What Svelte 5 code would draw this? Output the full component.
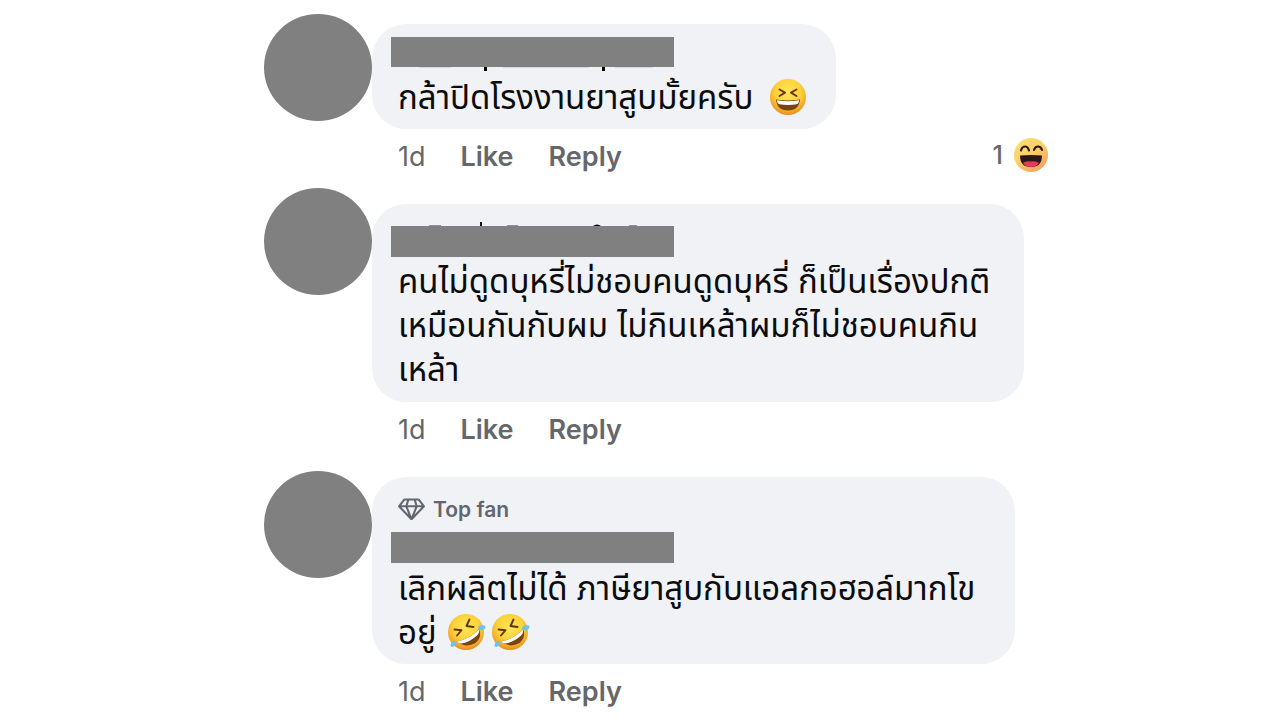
<script>
  const comments = [
    {
      kind: 'short',
      lines: [{ text: 'กล้าปิดโรงงานยาสูบมั้ยครับ', emoji: ['laugh'] }],
      reactions: 1
    },
    {
      kind: 'long',
      lines: [
        { text: 'คนไม่ดูดบุหรี่ไม่ชอบคนดูดบุหรี่ ก็เป็นเรื่องปกติ' },
        { text: 'เหมือนกันกับผม ไม่กินเหล้าผมก็ไม่ชอบคนกิน' },
        { text: 'เหล้า' }
      ]
    },
    {
      kind: 'fan',
      badge: 'Top fan',
      lines: [
        { text: 'เลิกผลิตไม่ได้ ภาษียาสูบกับแอลกอฮอล์มากโข' },
        { text: 'อยู่', emoji: ['rofl', 'rofl'] }
      ]
    }
  ];
</script>

{#snippet laugh()}
  <svg class="emoji" viewBox="0 0 36 36" role="img" aria-label="laughing">
    <circle cx="18" cy="18" r="18" fill="url(#face)" />
    <path d="M9.500 10.500 15 13.700 9.500 17M26.500 10.500 21 13.700 26.500 17" fill="none" stroke="#6b3a08" stroke-width="2" stroke-linecap="round" stroke-linejoin="round" />
    <path d="M6 20.500Q18 22.500 30 20.500Q29 31.500 18 31.500T6 20.500Z" fill="#7a4310" />
    <path d="M7 21.200Q18 23.200 29 21.200Q29 24.700 26.500 25.200Q18 26.600 9.500 25.200Q7 24.700 7 21.200Z" fill="#fff" />
  </svg>
{/snippet}

{#snippet rofl()}
  <svg class="emoji" viewBox="0 0 36 36" role="img" aria-label="rolling on the floor laughing">
    <circle cx="18" cy="18" r="18" fill="url(#face)" />
    <path d="M6.500 15.500 13.500 16.200 9 21.500M21.500 5.500 18.500 12 25.500 13" fill="none" stroke="#5f3508" stroke-width="1.900" stroke-linecap="round" stroke-linejoin="round" />
    <path d="M9 27.500Q22 25 31 15Q34.500 23 27.500 29Q18 34.500 9 27.500Z" fill="#7a4310" />
    <path d="M9 27.500Q22 25 30.600 15.500Q32 18.500 29 21.500Q22 28 13.500 29.500Q10.500 29.500 9 27.500Z" fill="#fff" />
    <path d="M30 14.500Q30 10 37 11.500Q38.500 14.500 35 16Q32 17 30 14.500ZM8 26.500Q9.500 31.500 4.500 33Q2.500 33.500 2.500 31Q3 27.500 8 26.500Z" fill="#6cc4ea" />
  </svg>
{/snippet}

<svg class="defs" aria-hidden="true">
  <defs>
    <radialGradient id="face" cx=".5" cy=".36" r=".65">
      <stop offset="0" stop-color="#ffe65a" />
      <stop offset=".55" stop-color="#fdd238" />
      <stop offset=".82" stop-color="#f3aa2b" />
      <stop offset="1" stop-color="#e38818" />
    </radialGradient>
    <linearGradient id="haha" x1="0" y1="0" x2=".7" y2="1">
      <stop offset="0" stop-color="#ffe571" />
      <stop offset=".5" stop-color="#fcd06a" />
      <stop offset="1" stop-color="#f5a25c" />
    </linearGradient>
  </defs>
</svg>

<main>
  <ul class="thread">
    {#each comments as comment}
      <li class="comment {comment.kind}">
        <div class="avatar"></div>
        <article>
          <div class="bubble">
            {#if comment.badge}
              <div class="badge">
                <svg viewBox="0 0 26 22" aria-hidden="true">
                  <path d="M6 1.500H20L25 8 13 20.500 1 8ZM1 8H25M10 1.500 8 8 13 20.500 18 8 16 1.500" />
                </svg>
                {comment.badge}
              </div>
            {/if}
            <div class="name">
              {#if comment.kind === 'short'}
                <svg class="marks below" viewBox="0 0 283 5" aria-hidden="true">
                  <path d="M93 0H96V4H93ZM211 0H214V4H211Z" />
                  <path d="M28 0H60V1H28ZM112 0H198V1H112ZM224 0H262V1H224Z" opacity=".1" />
                </svg>
              {:else if comment.kind === 'long'}
                <svg class="marks above" viewBox="0 0 283 5" aria-hidden="true">
                  <path d="M89 1H91V5H89ZM202 5Q206 2 210 5Z" />
                  <path d="M38 4H50V5H38ZM116 4H127V5H116ZM238 4H246V5H238Z" opacity=".4" />
                </svg>
              {/if}
            </div>
            <p>
              {#each comment.lines as line}
                <span class="line">
                  {line.text}
                  {#if line.emoji}
                    <span class="emojis">
                      {#each line.emoji as name}
                        {#if name === 'laugh'}{@render laugh()}{:else}{@render rofl()}{/if}
                      {/each}
                    </span>
                  {/if}
                </span>
              {/each}
            </p>
          </div>
          <footer>
            <time>1d</time>
            <button type="button">Like</button>
            <button type="button">Reply</button>
            {#if comment.reactions}
              <span class="reactions">
                {comment.reactions}
                <svg viewBox="0 0 34 34" role="img" aria-label="Haha">
                  <circle cx="17" cy="17" r="17" fill="url(#haha)" />
                  <path d="M7 12.500Q8 8.500 11 8.500T15 12.500M20 12Q21 8.500 24 8.500T28 12" fill="none" stroke="#2c1d18" stroke-width="2.200" stroke-linecap="round" />
                  <path d="M6 17.500Q17 16.500 28 17.500Q28 29 17 29T6 17.500Z" fill="#2d1716" />
                  <path d="M9 25Q12 22.500 17 23.500Q22 22.500 25 25Q22 29 17 29T9 25Z" fill="#e9385b" />
                </svg>
              </span>
            {/if}
          </footer>
        </article>
      </li>
    {/each}
  </ul>
</main>

<style>
  :global(body) {
    background: #fff;
  }
  .defs {
    position: absolute;
    width: 0;
    height: 0;
  }
  main {
    box-sizing: border-box;
    max-width: 1280px;
    padding: 14px 232px 0 264px;
    font-family: Inter, "Noto Sans Thai", "Noto Sans", sans-serif;
    color: #0b0c0e;
  }
  .thread {
    margin: 0;
    padding: 0;
    list-style: none;
  }
  .comment {
    display: grid;
    grid-template-columns: 108px 1fr;
    align-items: start;
  }
  .avatar {
    height: 107px;
    border-radius: 50%;
    background: #808080;
  }
  .short article {
    padding-top: 10px;
  }
  .long {
    padding-top: 5px;
  }
  .long article {
    padding-top: 16px;
  }
  .fan {
    padding-top: 15px;
  }
  .fan article {
    padding-top: 6px;
  }
  .bubble {
    box-sizing: border-box;
    width: fit-content;
    padding: 13px 30px 10px 26px;
    border-radius: 34px;
    background: #f1f2f6;
  }
  .long .bubble {
    padding: 22px 34px 11px 26px;
  }
  .fan .bubble {
    padding: 18px 40px 10px 26px;
  }
  .badge {
    display: flex;
    align-items: center;
    gap: 8px;
    height: 28px;
    margin-bottom: 9px;
    font-size: 21px;
    font-weight: 600;
    color: #606770;
  }
  .badge svg {
    width: 27px;
    fill: none;
    stroke: currentColor;
    stroke-width: 2;
    stroke-linejoin: round;
  }
  .name {
    position: relative;
    width: 283px;
    height: 31px;
    margin: 0 0 2px -7px;
    background: #808080;
  }
  .short .name {
    height: 30px;
    margin-bottom: 8px;
  }
  .fan .name {
    margin-bottom: 3px;
  }
  .marks {
    position: absolute;
    left: 0;
    width: 283px;
    height: 5px;
  }
  .above {
    bottom: 100%;
  }
  .below {
    top: 100%;
  }
  p {
    margin: 0;
    font-size: 33px;
    line-height: 44px;
  }
  .line {
    display: flex;
    align-items: center;
    gap: 11px;
    height: 44px;
    white-space: nowrap;
  }
  .short .line {
    gap: 17px;
  }
  .emojis {
    display: flex;
    gap: 8px;
  }
  .emoji {
    width: 36px;
    height: 36px;
    overflow: visible;
  }
  footer {
    display: flex;
    align-items: center;
    gap: 35px;
    height: 54px;
    padding-left: 26px;
    font-size: 27px;
    color: #65676b;
  }
  button {
    padding: 0;
    border: 0;
    background: none;
    font: inherit;
    font-weight: 600;
    color: inherit;
    cursor: pointer;
  }
  .reactions {
    display: flex;
    align-items: center;
    gap: 11px;
    margin-left: auto;
    padding-bottom: 3px;
    font-size: 25px;
    font-weight: 500;
  }
  .reactions svg {
    width: 34px;
    height: 34px;
  }
</style>
